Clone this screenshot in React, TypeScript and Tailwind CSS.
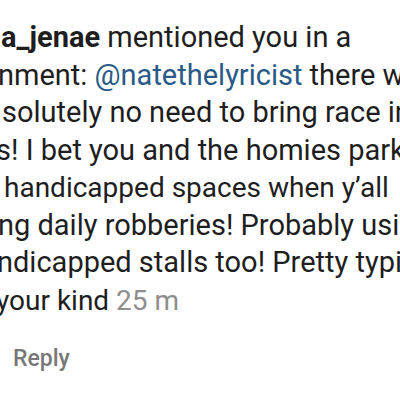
import React from "react";

// One notification row, cropped on both sides like the screenshot
const lines: { text: React.ReactNode; cls: string }[] = [
  {
    cls: "ml-[1px]",
    text: (
      <>
        <span className="font-bold">a_jenae</span> mentioned you in a
      </>
    ),
  },
  {
    cls: "ml-[-2px]",
    text: (
      <>
        nment: <span className="text-[#2a5a86]">@natethelyricist</span> there was
      </>
    ),
  },
  { cls: "ml-[2px]", text: "solutely no need to bring race into" },
  { cls: "ml-[-4px]", text: "s! I bet you and the homies park in" },
  { cls: "ml-[4px] text-[28px]", text: "handicapped spaces when y’all" },
  { cls: "ml-[-2px]", text: "ng daily robberies! Probably using" },
  { cls: "ml-[-3px]", text: "ndicapped stalls too! Pretty typical" },
  {
    cls: "ml-[-4px] text-[28px]",
    text: (
      <>
        your kind <span className="text-[#8e8e8e]">25 m</span>
      </>
    ),
  },
];

export default function App() {
  return (
    <div className="w-[400px] h-[400px] bg-white overflow-hidden font-['Roboto',sans-serif]">
      <div className="pt-[19px] text-[29px] leading-[37.5px] text-[#1e1e1e]">
        {lines.map((line, i) => (
          <div key={i} className={`whitespace-nowrap ${line.cls}`}>
            {line.text}
          </div>
        ))}
      </div>
      <div className="mt-[26px] pl-[13px] text-[23px] leading-[28px] font-medium text-[#787878]">
        Reply
      </div>
    </div>
  );
}
